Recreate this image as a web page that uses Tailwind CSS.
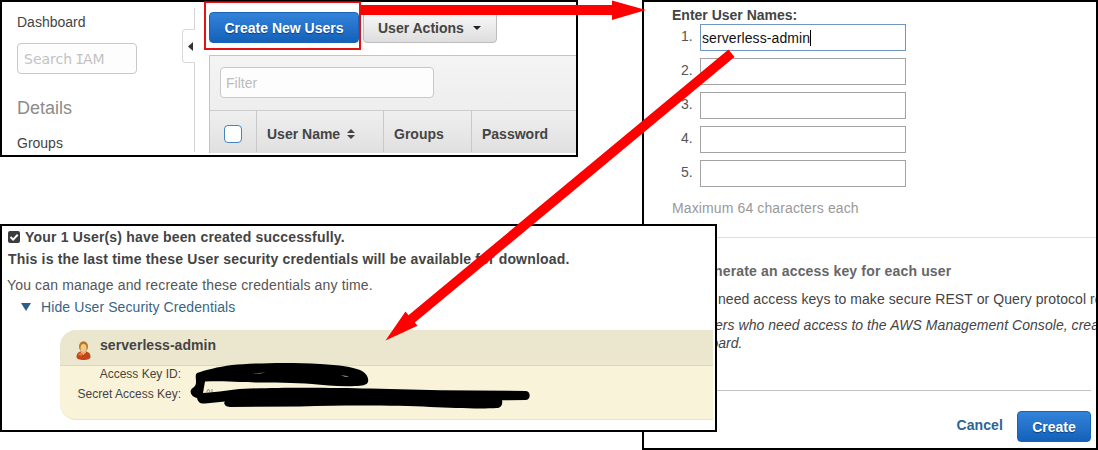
<!DOCTYPE html>
<html lang="en">
<head>
<meta charset="utf-8">
<title>Create IAM users</title>
<script src="https://cdn.jsdelivr.net/npm/@tailwindcss/browser@4"></script>
</head>
<body class="bg-white">
<main class="relative w-[1098px] h-[450px] overflow-hidden font-['Liberation_Sans',Arial,sans-serif] text-sm leading-4 text-[#444] whitespace-nowrap">

  <!-- User list -->
  <section class="absolute left-0 top-0 w-[578px] h-[157px] border-2 border-black bg-white flex overflow-hidden">
    <aside class="w-[180px] pl-[15px] pt-3 flex flex-col">
      <div>Dashboard</div>
      <div class="mt-[13px] w-[120px] h-[31px] shrink-0 rounded border border-[#c9c9c9] bg-[#fdfdfd] pl-1.5 flex items-center font-['DejaVu_Sans',sans-serif] text-[#c3c3c3] whitespace-pre">Search <span class="font-['DejaVu_Sans_Mono',monospace] -mx-px">I</span>AM</div>
      <div class="mt-6 text-lg leading-5 text-[#8c8c8c]">Details</div>
      <div class="mt-[17px]">Groups</div>
    </aside>
    <div class="w-[13px] pt-1.5 pb-[3px] flex flex-col items-end">
      <div class="w-px h-[21px] bg-[#d4d4d4]"></div>
      <div class="w-[13px] h-[34px] rounded-l border border-r-0 border-[#d9d9d9] flex items-center justify-end pr-0.5">
        <svg width="5" height="9" viewBox="0 0 5 9"><path d="M5 0v9L0 4.5z" fill="#333"/></svg>
      </div>
      <div class="w-px flex-1 bg-[#d4d4d4]"></div>
    </div>
    <div class="flex-1 ml-3.5 flex flex-col">
      <div class="pt-2.5 h-[53px] flex gap-1 font-bold">
        <div class="w-[150px] h-[31px] rounded border border-[#1a62b3] bg-linear-to-b from-[#3383da] to-[#1461b9] text-white flex items-center justify-center [text-shadow:0_1px_1px_#0a3f80]">Create New Users</div>
        <div class="w-[134px] h-[31px] rounded border border-[#bdbdbd] bg-linear-to-b from-[#f8f8f8] to-[#dedede] flex items-center pl-3.5 gap-[9px]">User Actions
          <svg width="8" height="4" viewBox="0 0 8 4"><path d="M0 0h8L4 4z" fill="#222"/></svg>
        </div>
      </div>
      <div class="h-[98px] border-l border-t border-[#c4c4c4] flex flex-col">
        <div class="h-[55px] pl-2.5 pt-[11px] bg-linear-to-b from-[#f4f4f4] to-[#eeeeee] border-b border-[#cccccc]">
          <div class="w-[214px] h-[31px] rounded border border-[#c8c8c8] bg-[#fdfdfd] pl-[5px] flex items-center text-[#bcbcbc]">Filter</div>
        </div>
        <div class="flex-1 flex bg-linear-to-b from-[#efefef] to-[#e0e0e0] font-bold pb-px">
          <div class="w-[47px] pl-3.5 flex items-center border-r border-[#c9c9c9]">
            <div class="w-[18px] h-[18px] mt-1 rounded border border-[#4584bd] bg-white"></div>
          </div>
          <div class="w-[127px] pl-2.5 pt-[5px] flex items-center gap-[7px] border-r border-[#c9c9c9]">User Name
            <svg width="8" height="10" viewBox="0 0 8 10"><path d="M0 4l4-4 4 4zM0 6h8l-4 4z" fill="#444"/></svg>
          </div>
          <div class="w-[88px] pl-2.5 pt-[5px] flex items-center border-r border-[#c9c9c9]">Groups</div>
          <div class="pl-2.5 pt-[5px] flex items-center">Password</div>
        </div>
      </div>
    </div>
  </section>

  <!-- New user form -->
  <section class="absolute left-[642px] top-0 w-[456px] h-[450px] border-2 border-black bg-white overflow-hidden flex flex-col">
    <div class="pl-7 pt-[5px] font-bold">Enter User Names:</div>
    <ol class="pl-[37px] mt-px flex flex-col gap-[7px] text-[#555]">
      <li class="flex items-start"><span class="w-[19px] pt-1">1.</span><span class="w-[206px] h-[27px] border border-[#7095c0] pl-px flex items-center text-[#111] tracking-[0.1px]">serverless-admin<i class="w-px h-4 bg-black"></i></span></li>
      <li class="flex items-start"><span class="w-[19px] pt-1">2.</span><span class="w-[206px] h-[27px] border border-[#a3a3a3]"></span></li>
      <li class="flex items-start"><span class="w-[19px] pt-1">3.</span><span class="w-[206px] h-[27px] border border-[#a3a3a3]"></span></li>
      <li class="flex items-start"><span class="w-[19px] pt-1">4.</span><span class="w-[206px] h-[27px] border border-[#a3a3a3]"></span></li>
      <li class="flex items-start"><span class="w-[19px] pt-1">5.</span><span class="w-[206px] h-[27px] border border-[#a3a3a3]"></span></li>
    </ol>
    <div class="pl-7 mt-[13px] text-[#999] tracking-[0.12px]">Maximum 64 characters each</div>
    <div class="ml-7 mt-[21px] h-px shrink-0 bg-[#dedede]"></div>
    <div class="pl-[51px] mt-[25px] font-bold text-[#666] tracking-[0.16px]">Generate an access key for each user</div>
    <div class="pl-[33px] mt-3 tracking-[0.08px]">Users need access keys to make secure REST or Query protocol re</div>
    <div class="pl-[31px] mt-[9px] italic leading-[18px] tracking-[0.05px]">For users who need access to the AWS Management Console, crea<br><span class="-ml-[3px]">dashboard.</span></div>
    <div class="ml-7 mr-[5px] mt-[38px] h-px shrink-0 bg-[#c2c2c2]"></div>
    <div class="mt-5 pr-[5px] flex justify-end items-start gap-3.5 font-bold">
      <span class="pt-[6px] text-[#2a6598] tracking-[0.1px]">Cancel</span>
      <span class="w-[74px] h-[31px] rounded border border-[#1a62b3] bg-linear-to-b from-[#3383da] to-[#1461b9] text-white flex items-center justify-center [text-shadow:0_1px_1px_#0a3f80]">Create</span>
    </div>
  </section>

  <!-- Credentials -->
  <section class="absolute left-0 top-[224px] w-[717px] h-[208px] border-2 border-black bg-white overflow-hidden flex flex-col">
    <div class="pl-1.5 pt-[3px] flex gap-[5px] font-bold tracking-[0.18px]">
      <svg class="mt-0.5" width="12" height="12" viewBox="0 0 12 12"><rect width="12" height="12" rx="2" fill="#3c3c3c"/><path d="M2.5 6l2.6 2.6L9.7 3.8" fill="none" stroke="#fff" stroke-width="2"/></svg>
      Your 1 User(s) have been created successfully.
    </div>
    <div class="pl-1.5 mt-1.5 font-bold tracking-[0.18px]">This is the last time these User security credentials will be available for download.</div>
    <div class="pl-[5px] mt-2.5 text-[#555] tracking-[0.15px]">You can manage and recreate these credentials any time.</div>
    <div class="pl-[19px] mt-1.5 flex items-center gap-2.5 text-[#3a6485] tracking-[0.1px]">
      <svg width="10" height="8" viewBox="0 0 10 8"><path d="M0 0h10L5 8z" fill="#2c5f85"/></svg>
      Hide User Security Credentials
    </div>
    <div class="ml-[58px] mt-[15px] w-[653px] h-[90px] rounded-l-2xl bg-[#f8f3d9] overflow-hidden border-b border-[#e9e3c8]">
      <div class="h-9 bg-[#ebe6ce] border-b border-[#dcd6c2] pl-4 flex items-start gap-[9px] font-bold">
        <svg class="mt-[11px]" width="15" height="19" viewBox="0 0 15 19">
          <path d="M.5 16c0-4 2.500-5.500 5-5.500h3.500c3 0 5.500 1.500 5.500 5.500 0 2-3 3-7 3s-7-1-7-3z" fill="#c2461c"/>
          <path d="M2 14c1-2 3-3 5-3l-1 4z" fill="#e37a3c"/>
          <path d="M5 9h5v2.500L7.500 14 5 11.500z" fill="#e8b070"/>
          <ellipse cx="7.500" cy="5.500" rx="4.500" ry="5.300" fill="#b97820"/>
          <ellipse cx="7.500" cy="7" rx="3" ry="4" fill="#f0c88a"/>
        </svg>
        <span class="pt-[7px] tracking-[0.06px]">serverless-admin</span>
      </div>
      <div class="w-[121px] flex flex-col text-right text-xs leading-5">
        <div class="-mt-0.5">Access Key ID:</div>
        <div>Secret Access Key:</div>
      </div>
    </div>
  </section>

  <!-- Annotations: redaction, highlight box and arrows -->
  <svg class="absolute inset-0" width="1098" height="450" viewBox="0 0 1098 450">
    <path d="M206.500 392l2-3 1.500 3M212 389v3" fill="none" stroke="#8d8a7c"/>
    <path d="M197 373C205 370 218 367 232 365 255 363 290 362 320 364 340 365 352 367 360 370 366 373 369 377 368 382 367 385 362 386 355 386 340 387 325 385 312 384 290 382 260 383 240 382 227 381 215 381 205 381.500L203 393C215 392 225 391 235 389.500 265 387 330 387.500 370 388.500L440 390.300 526 391A4.600 4.600 0 0 1 526 400L502 400.300C503 404 501 408 497 408 480 409 455 408 430 407 400 405.500 350 405 300 406.500L230 407C225 407 223 403 225 401.500L205 403.500C200 404 198 402 197 398 191 397 189 391 192 388.500 194 387 196 386 196 382 196 377 195 375 197 373Z" fill="#000"/>
    <path d="M253 373.700c4-1 8-1.200 13-1-4 .6-8 .9-13 1zM341 375.300c3 .2 5 .8 8 1.200-3 .8-6 0-8-1.200z" fill="#aaa798"/>
    <rect x="205" y="2" width="155" height="47" fill="none" stroke="#e01212" stroke-width="2"/>
    <rect x="204" y="1" width="157" height="1" fill="#8a0d0d"/>
    <path d="M361 5h251V.5L646 10 612 20v-5H361z" fill="#fe0000"/>
    <path d="M385.500 340.500L405.500 311.500 408.500 315.200 728.500 49.500 734.500 57 414.800 322.600 417.500 325.800z" fill="#fe0000"/>
  </svg>
</main>
</body>
</html>
